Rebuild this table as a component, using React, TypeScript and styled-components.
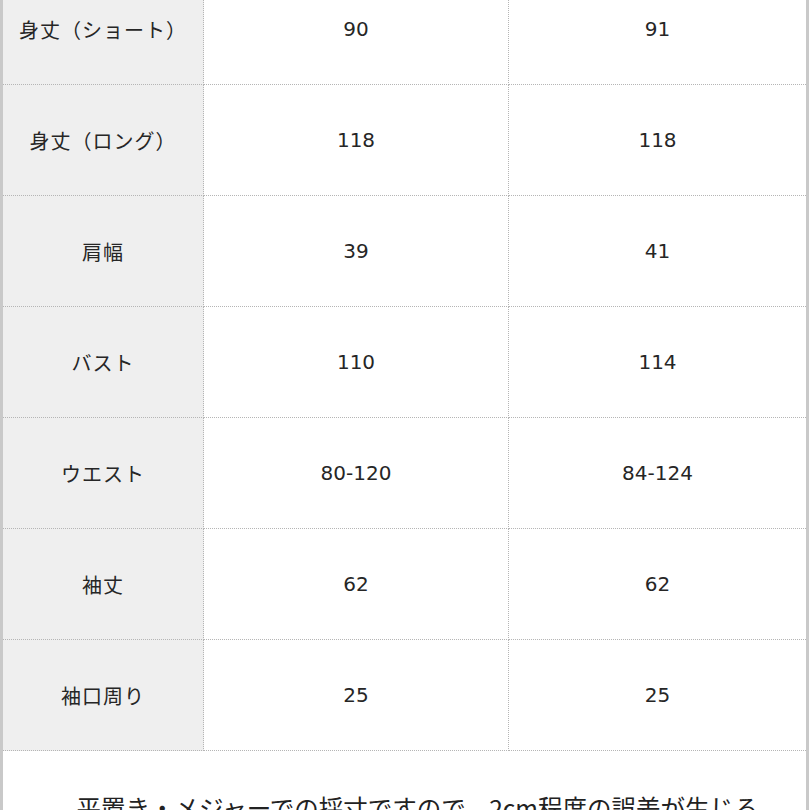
import React from 'react'
import styled, { createGlobalStyle } from 'styled-components'

const rows: [string, string, string][] = [
    ['身丈（ショート）', '90', '91'],
    ['身丈（ロング）', '118', '118'],
    ['肩幅', '39', '41'],
    ['バスト', '110', '114'],
    ['ウエスト', '80-120', '84-124'],
    ['袖丈', '62', '62'],
    ['袖口周り', '25', '25'],
]

export default function App() {
    return (
        <>
            <GlobalStyle />
            <Page>
                <SizeTable>
                    <tbody>
                        {rows.map(([label, a, b]) => (
                            <tr key={label}>
                                <LabelCell>{label}</LabelCell>
                                <ValueCell>{a}</ValueCell>
                                <ValueCell $last>{b}</ValueCell>
                            </tr>
                        ))}
                    </tbody>
                </SizeTable>
                <Note>
                    平置き・メジャーでの採寸ですので、2cm程度の誤差が生じる場合がございます。
                </Note>
            </Page>
        </>
    )
}

const GlobalStyle = createGlobalStyle`
    html, body {
        margin: 0;
        padding: 0;
        background: #ffffff;
        overflow: hidden;
    }
    body {
        font-family: "DejaVu Sans", "Noto Sans CJK JP", sans-serif;
        color: #262626;
    }
`

const Page = styled.div`
    width: 809px;
    height: 810px;
    overflow: hidden;
    border-left: 3px solid #c9c9c9;
    border-right: 3px solid #c9c9c9;
    box-sizing: border-box;
    background: #ffffff;
`

const SizeTable = styled.table`
    width: 100%;
    border-collapse: collapse;
    table-layout: fixed;
    margin-top: -26px;
`

const Cell = styled.td`
    height: 110px;
    padding: 0;
    text-align: center;
    vertical-align: middle;
    font-size: 20px;
    border-bottom: 1px dotted #b5b5b5;
`

const LabelCell = styled(Cell)`
    width: 200px;
    background: #efefef;
    border-right: 1px dotted #b5b5b5;
    font-family: "Noto Sans CJK JP", sans-serif;
    letter-spacing: 1px;
    white-space: nowrap;
`

const ValueCell = styled(Cell)<{ $last?: boolean }>`
    background: #ffffff;
    border-right: ${p => (p.$last ? 'none' : '1px dotted #b5b5b5')};
    width: ${p => (p.$last ? 'auto' : '304px')};
`

const Note = styled.p`
    margin: 0;
    padding: 40px 46px 0 72px;
    text-align: center;
    font-family: "Noto Sans CJK JP", sans-serif;
    font-size: 24.5px;
    line-height: 34px;
    color: #222222;
`
